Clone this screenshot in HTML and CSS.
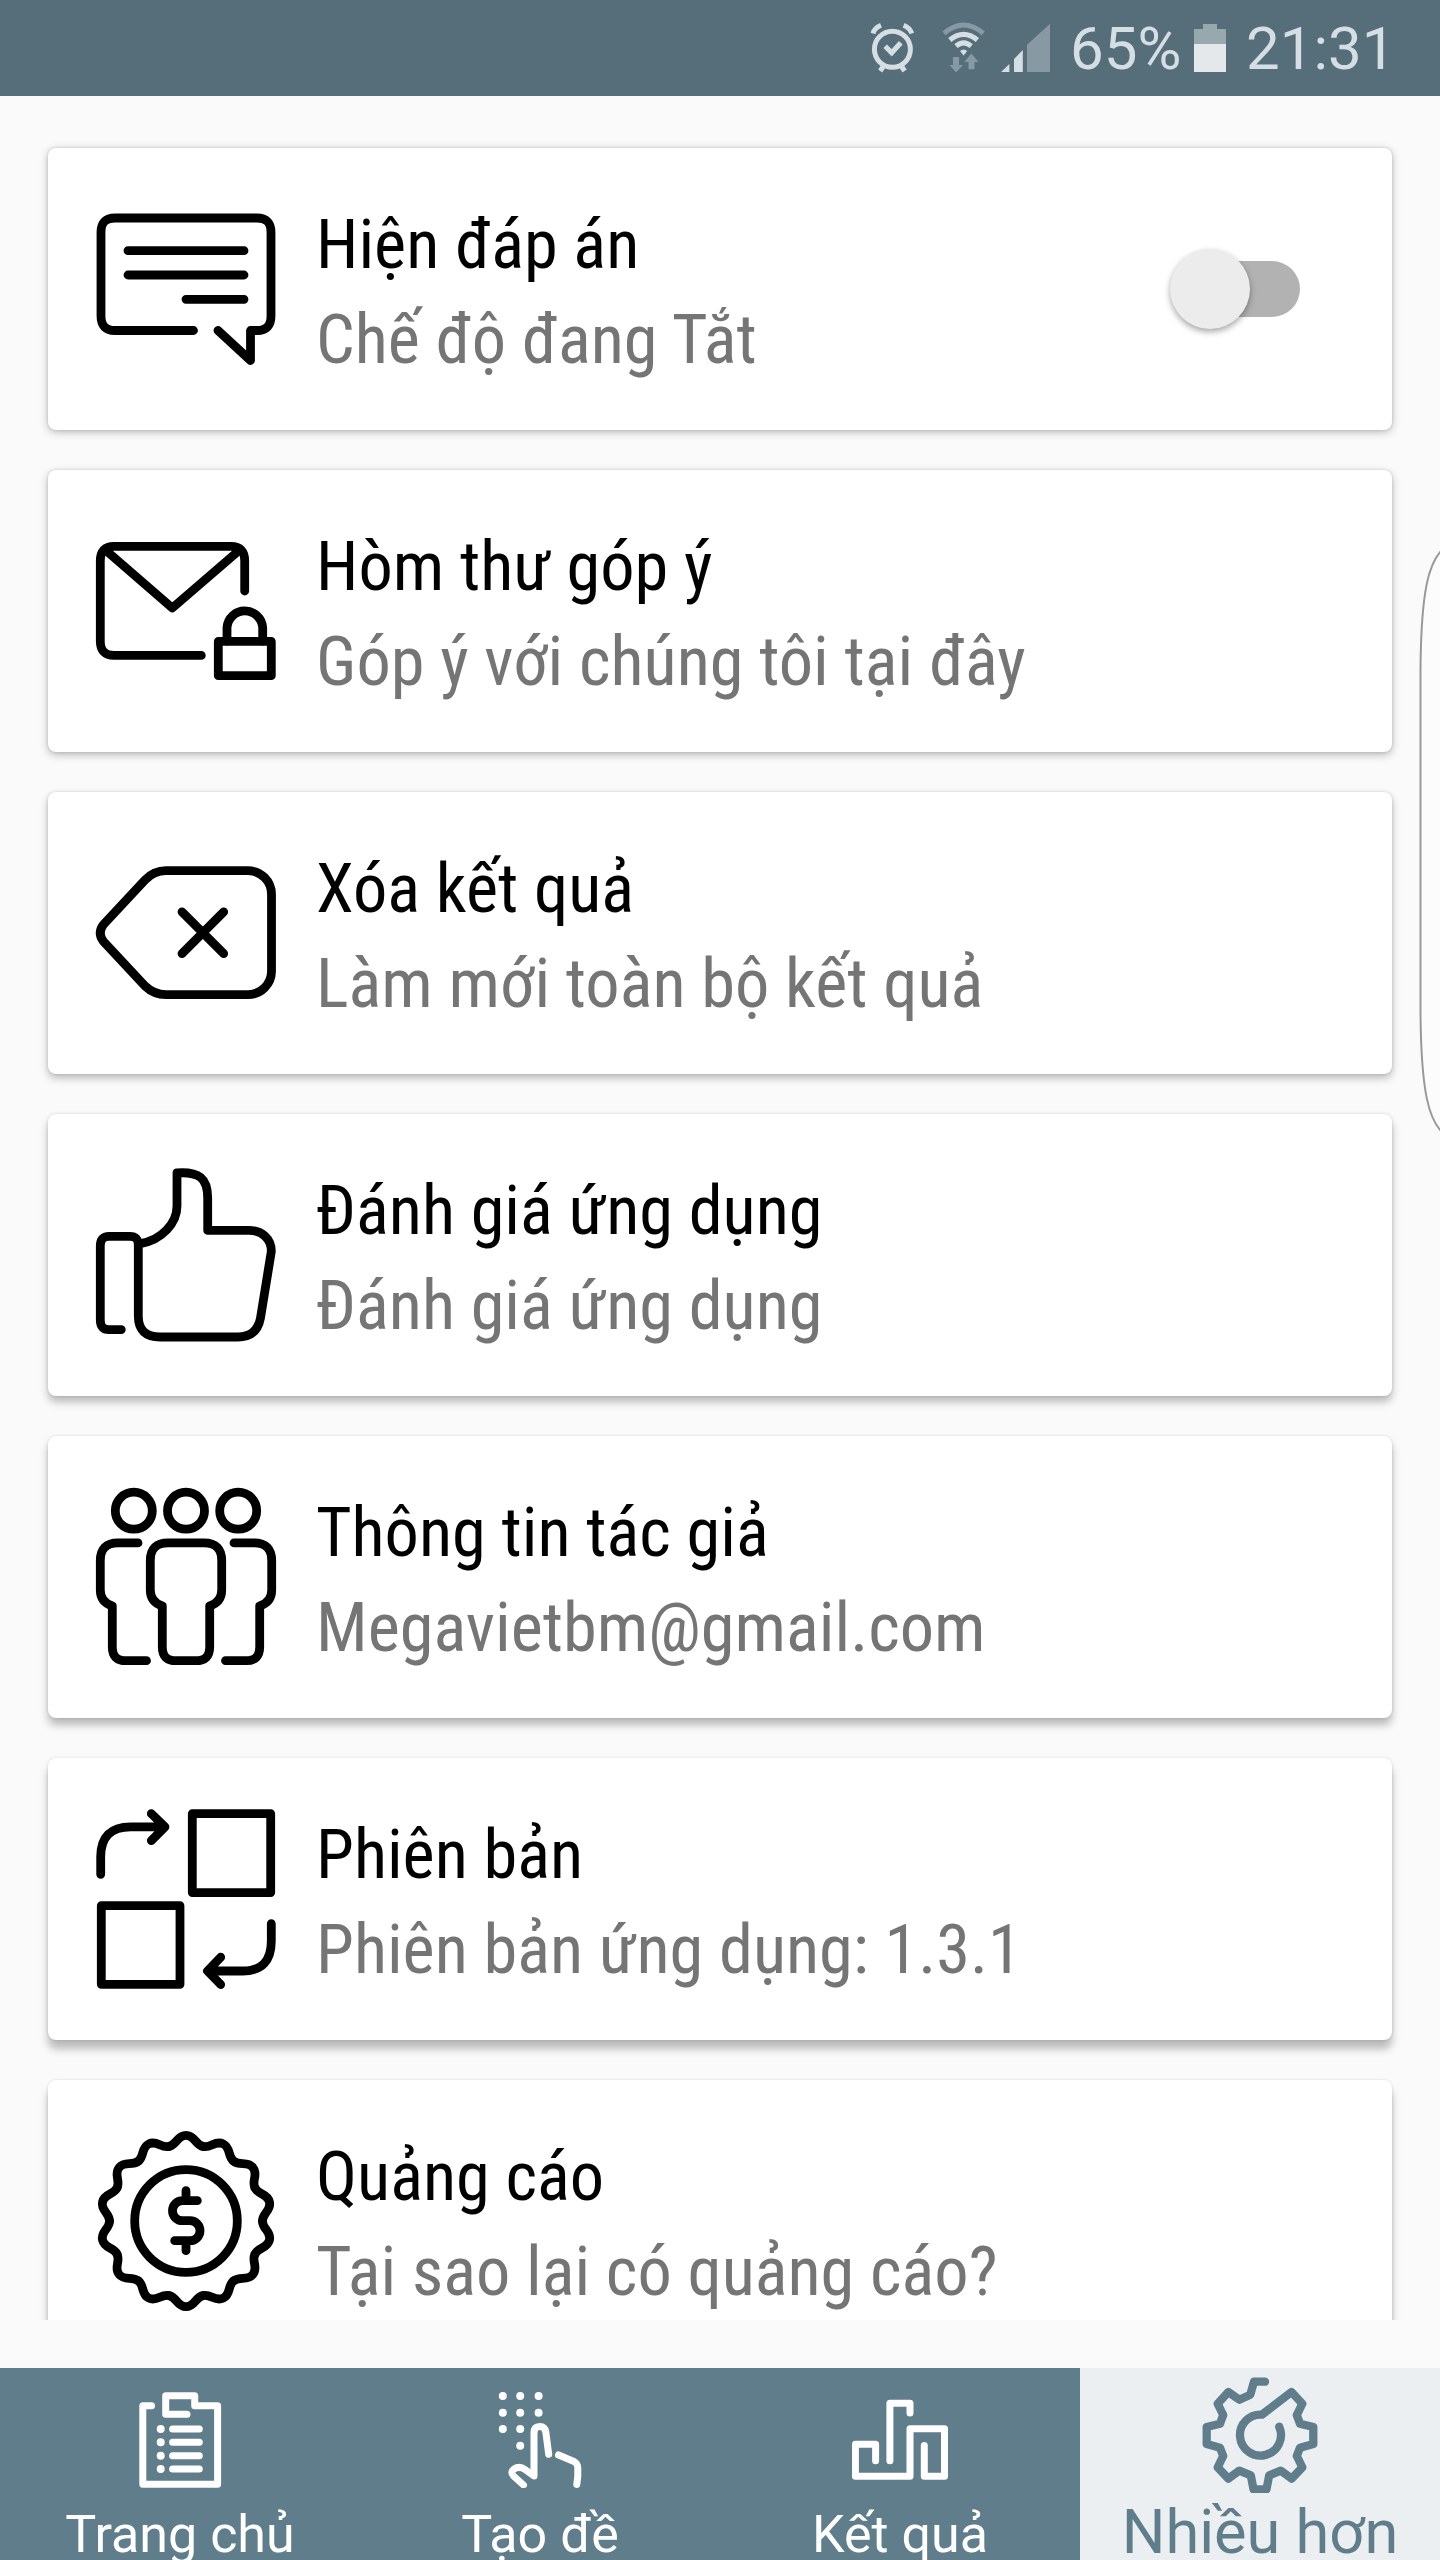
FILE: index.html
```html
<!DOCTYPE html>
<html lang="vi">
<head>
  <meta charset="UTF-8">
  <title>Nhiều hơn</title>
  <link rel="stylesheet" href="styles.css">
</head>
<body>
  <div class="status-bar">
    <svg class="alarm" width="44" height="52" viewBox="0 0 44 52">
      <circle cx="22.4" cy="27.3" r="18"/>
      <path d="M15.2 24.3l6.5 6.5 9.1-10M2.9 11.5Q4.5 6 11 3.3M41.8 11.5Q40 6 33.6 3.3M13.2 44.5l-3 4.5M31.6 44.5l3 4.5"/>
    </svg>
    <svg class="wifi" width="44" height="52" viewBox="0 0 44 52">
      <path class="dim-line" d="M2 11.3Q21.6-5.3 41.2 11.3"/>
      <path class="line" d="M7.8 18Q21.6 6.6 35.4 18M14 24.2Q21.6 17.5 29.2 24.2"/>
      <path class="full" d="M18 29q3.6-3 7.2 0l-3.6 4.5z"/>
      <path class="dim" d="M11 35h6v8h4l-7 7.5L7.5 43H11zM26.5 47.3h6V40H36.5l-7.2-8.5-7 8.5h4.2z"/>
    </svg>
    <svg class="signal" width="49" height="52" viewBox="0 0 49 52">
      <path class="full" d="M0 50l8.4-8v8zM13 50V37l8.8-9v22z"/>
      <path class="dim" d="M26 50V22.7L49 1.7V50z"/>
    </svg>
    <span class="percent">65%</span>
    <svg class="battery" width="32" height="52" viewBox="0 0 32 52">
      <path class="used" d="M0 7h9V2h14v5h9v15H0z"/>
      <path class="left" d="M0 22h32v28H0z"/>
    </svg>
    <span class="clock">21:31</span>
  </div>

  <div class="list">
    <div class="card">
      <svg class="icon" viewBox="0 0 180 180">
        <path d="M97.5 131.5H19Q5 131.5 5 117V33Q5 19 19 19H161Q175 19 175 33V117Q175 131.5 161 131.5H154.5V161.5L122 131.5"/>
        <path d="M32 51.7H148M32 76H148M90 100.3H148"/>
      </svg>
      <div class="text">
        <div class="title">Hiện đáp án</div>
        <div class="sub">Chế độ đang Tắt</div>
      </div>
      <div class="switch"><div class="thumb"></div></div>
    </div>

    <div class="card">
      <svg class="icon" viewBox="0 0 180 180">
        <path d="M105.3 134.4H18Q4.3 134.4 4.3 120V40Q4.3 25.4 18 25.4H135Q148.7 25.4 148.7 40V70"/>
        <path d="M10 29.5L76.3 87 143 29.5"/>
        <rect x="122.3" y="120.4" width="53" height="34.3"/>
        <path d="M131 120V106.5a17.9 17.9 0 0 1 35.7 0V120"/>
      </svg>
      <div class="text">
        <div class="title">Hòm thư góp ý</div>
        <div class="sub">Góp ý với chúng tôi tại đây</div>
      </div>
    </div>

    <div class="card">
      <svg class="icon" viewBox="0 0 180 180">
        <path d="M70 27.7H152A23.5 23.5 0 0 1 175.5 51.5V127.8A23.5 23.5 0 0 1 152 151.6H70Q58 151.6 49 143L7.5 98.5Q1 90 7.5 81.5L49 37Q58 27.7 70 27.7z"/>
        <path d="M86 68.8L127.7 110.6M127.7 68.8L86 110.6"/>
      </svg>
      <div class="text">
        <div class="title">Xóa kết quả</div>
        <div class="sub">Làm mới toàn bộ kết quả</div>
      </div>
    </div>

    <div class="card">
      <svg class="icon" viewBox="0 0 180 180">
        <path d="M25.3 164.6H13Q4.3 164.6 4.3 155V81Q4.3 71.4 13 71.4H34Q42.3 71.4 42.3 80V151Q42.3 172 64 172H142Q161 172 164.5 153L175.3 86.5C175.5 74 166 65.4 153 65.4H111.7V33C111.7 13 103 6.5 81 7.9V41C81 58 66 75 44.5 78.6"/>
      </svg>
      <div class="text">
        <div class="title">Đánh giá ứng dụng</div>
        <div class="sub">Đánh giá ứng dụng</div>
      </div>
    </div>

    <div class="card">
      <svg class="icon" viewBox="0 0 180 180">
        <circle cx="37.8" cy="23.7" r="18.5"/>
        <circle cx="90" cy="23.7" r="18.5"/>
        <circle cx="142.2" cy="23.7" r="18.5"/>
        <path d="M72 55.9H108Q125.7 55.9 125.7 73.5V103Q125.7 115 113.7 119V160Q113.7 173.7 100 173.7H80Q66.3 173.7 66.3 160V119Q54.3 115 54.3 103V73.5Q54.3 55.9 72 55.9z"/>
        <path d="M42 55.9H22Q4.3 55.9 4.3 73.5V103Q4.3 115 16.3 119V160Q16.3 173.7 30 173.7H50.5"/>
        <path d="M138 55.9H158Q175.7 55.9 175.7 73.5V103Q175.7 115 163.7 119V160Q163.7 173.7 150 173.7H129.5"/>
      </svg>
      <div class="text">
        <div class="title">Thông tin tác giả</div>
        <div class="sub">Megavietbm@gmail.com</div>
      </div>
    </div>

    <div class="card">
      <svg class="icon" viewBox="0 0 180 180">
        <rect x="96.3" y="4.6" width="78.4" height="79"/>
        <rect x="5.3" y="96.7" width="78.7" height="78.6"/>
        <path d="M4.7 65.3V47.8Q4.7 17.8 34.7 17.8H69M55.3 4.6L69 17.8 55.3 31.6"/>
        <path d="M175.3 114.6V132Q175.3 162 146.7 162H111.5M124.7 148.2L111.5 162 124.7 175.5"/>
      </svg>
      <div class="text">
        <div class="title">Phiên bản</div>
        <div class="sub">Phiên bản ứng dụng: 1.3.1</div>
      </div>
    </div>

    <div class="card">
      <svg class="icon" viewBox="0 0 180 180">
        <defs>
          <path id="lobe" d="M-16.9-74.6C-9-76.4-9-85.6 0-85.6S9-76.4 16.9-74.6"/>
        </defs>
        <g transform="translate(90 90)">
          <use href="#lobe"/>
          <use href="#lobe" transform="rotate(25.714)"/>
          <use href="#lobe" transform="rotate(51.429)"/>
          <use href="#lobe" transform="rotate(77.143)"/>
          <use href="#lobe" transform="rotate(102.857)"/>
          <use href="#lobe" transform="rotate(128.571)"/>
          <use href="#lobe" transform="rotate(154.286)"/>
          <use href="#lobe" transform="rotate(180)"/>
          <use href="#lobe" transform="rotate(205.714)"/>
          <use href="#lobe" transform="rotate(231.429)"/>
          <use href="#lobe" transform="rotate(257.143)"/>
          <use href="#lobe" transform="rotate(282.857)"/>
          <use href="#lobe" transform="rotate(308.571)"/>
          <use href="#lobe" transform="rotate(334.286)"/>
        </g>
        <circle cx="90" cy="90" r="51.3"/>
        <path d="M101.3 69.7H86.5a10 10 0 0 0 0 20H94a10 10 0 0 1 0 20H78.7M90 59.7V69.7M90 109.7V119.7"/>
      </svg>
      <div class="text">
        <div class="title">Quảng cáo</div>
        <div class="sub">Tại sao lại có quảng cáo?</div>
      </div>
    </div>
  </div>

  <div class="nav">
    <div class="tab">
      <svg viewBox="0 0 96 96">
        <path d="M19.5 13.7H10.8V92.3H85.6V13.7H62.7V3.7H33.7V22.3H55"/>
        <path d="M40.6 37H67.3M40.6 50.3H67.3M40.6 63.7H67.3M40.6 77H67.3"/>
        <path class="dots" d="M28.7 37h.01M28.7 50.3h.01M28.7 63.7h.01M28.7 77h.01"/>
      </svg>
      <span>Trang chủ</span>
    </div>
    <div class="tab">
      <svg viewBox="0 0 96 96">
        <path class="dots" d="M10.8 4h.01M28.2 4h.01M46.6 4h.01M10.8 20.7h.01M28.2 20.7h.01M46.6 20.7h.01M10.8 37h.01M28.2 37h.01M28.2 53.7h.01"/>
        <path d="M56.7 62.3L53.8 40Q53 34.5 47.7 34.5 42 34.5 42 41V84L33 77.5Q27.5 73.5 22 77 18 80 21.5 84L31.500 93"/>
        <path d="M66.5 63L82 69.5Q85.8 71.5 85.8 76V84L84.8 92.5"/>
      </svg>
      <span>Tạo đề</span>
    </div>
    <div class="tab">
      <svg viewBox="0 0 96 96">
        <path d="M23.6 68.7V52.3H3.4V84.3H58V36.7H92.5V84.3H72.3V53.5M37.9 68.7V11.3H58V21"/>
      </svg>
      <span>Kết quả</span>
    </div>
    <div class="tab active">
      <svg viewBox="0 0 116 116">
        <path d="M63 4.7H52L48.3 17.7 37.3 22.7 26.3 15 15.7 26.7 21.2 38 18 46.7 4.7 50V67L18 70.7 21.2 79 15.7 90.3 26.3 101.7 37.3 93.7 48.8 98.3 51.5 112.3H64.5L67.2 98.3 78.7 93.7 89.7 101.7 100.3 90.3 94.8 79 98 70.7 111.3 67V50L98 46.7 94.8 38 100.3 26.7 89.5 15 60 37.6A20.5 20.5 0 1 0 77.2 49.7"/>
      </svg>
      <span>Nhiều hơn</span>
    </div>
  </div>

  <!-- edge panel handle -->
  <svg class="edge" width="21" height="580" viewBox="0 0 21 580">
    <path d="M22 0C11 12 2 35 1.5 120V460C2 545 11 568 22 580"/>
  </svg>
</body>
</html>
```
FILE: styles.css
```css
* {
  box-sizing: border-box;
}

body {
  margin: 0;
  width: 1440px;
  height: 2560px;
  display: flex;
  flex-direction: column;
  position: relative;
  overflow: hidden;
  background-color: #fafafa;
  font-family: Roboto, sans-serif;
}

.status-bar {
  height: 96px;
  flex: none;
  display: flex;
  align-items: center;
  justify-content: flex-end;
  padding-right: 48px;
  background-color: #566e79;
  color: #d5dee3;
  font-size: 60px;
  line-height: 96px;
}

.status-bar svg {
  flex: none;
}

.status-bar span {
  padding-top: 2px;
}

.alarm {
  fill: none;
  stroke: #d5dee3;
  stroke-width: 5;
  margin-right: 28px;
}

.wifi {
  margin-right: 15px;
}

.line, .dim-line {
  fill: none;
  stroke: #d5dee3;
  stroke-width: 5;
}

.dim-line {
  stroke: #8799a2;
}

.full {
  fill: #d5dee3;
}

.dim {
  fill: #8799a2;
}

.signal {
  margin-right: 20px;
}

.percent {
  width: 106px;
  margin-right: 18px;
}

.used {
  fill: #98a9ae;
}

.left {
  fill: #e4e8eb;
}

.clock {
  width: 146px;
  margin-left: 20px;
}

.list {
  height: 2224px;
  flex: none;
  overflow: hidden;
  padding: 52px 48px 0;
  display: flex;
  flex-direction: column;
  gap: 40px;
}

.card {
  --drop: 2px;
  height: 282px;
  flex: none;
  display: flex;
  align-items: center;
  padding: 0 48px;
  border-radius: 8px;
  background-color: #fff;
  box-shadow: 0 var(--drop) 8px rgba(0,0,0,0.26), 0 0 3px rgba(0,0,0,0.14);
}

.card:nth-child(2) { --drop: 3px; }
.card:nth-child(3) { --drop: 4px; }
.card:nth-child(4) { --drop: 6px; }
.card:nth-child(5) { --drop: 7px; }
.card:nth-child(6) { --drop: 9px; }
.card:nth-child(7) { --drop: 10px; }

.icon {
  width: 180px;
  height: 180px;
  flex: none;
  fill: none;
  stroke: #000;
  stroke-width: 8.8;
  stroke-linecap: round;
  stroke-linejoin: round;
  overflow: visible;
}

.text {
  flex: 1;
  margin-left: 40px;
  padding-top: 8px;
  font-family: "Roboto Condensed", Roboto, sans-serif;
  font-stretch: 75%;
  font-size: 68.4px;
  line-height: 95px;
  white-space: nowrap;
}

.title {
  color: #000;
}

.sub {
  color: #757575;
}

.switch {
  position: relative;
  width: 120px;
  height: 56px;
  margin-right: 44px;
  border-radius: 28px;
  background-color: #b2b2b2;
}

.thumb {
  position: absolute;
  left: -10px;
  top: -12px;
  width: 80px;
  height: 80px;
  border-radius: 50%;
  background-color: #ececec;
  box-shadow: 0 3px 6px rgba(0,0,0,0.35);
}

.nav {
  height: 192px;
  margin-top: 48px;
  flex: none;
  display: flex;
}

.tab {
  flex: 1;
  display: flex;
  flex-direction: column;
  align-items: center;
  padding-top: 24px;
  background-color: #607d8b;
  color: #fff;
  font-size: 52px;
  line-height: 50px;
  white-space: nowrap;
}

.tab svg {
  width: 96px;
  height: 96px;
  flex: none;
  margin-bottom: 22px;
  fill: none;
  stroke: currentColor;
  stroke-width: 7;
  stroke-linecap: round;
  stroke-linejoin: round;
}

.tab .dots {
  stroke-width: 8;
}

.active {
  padding-top: 9px;
  background-color: #eceff1;
  color: #607d8b;
  font-size: 61.3px;
  line-height: 56px;
}

.active svg {
  width: 116px;
  height: 116px;
  margin-bottom: 11px;
  stroke-width: 8.3;
}

.edge {
  position: absolute;
  right: 0;
  top: 551px;
  fill: #fcfcfc;
  stroke: #999;
  stroke-width: 2;
}
```
